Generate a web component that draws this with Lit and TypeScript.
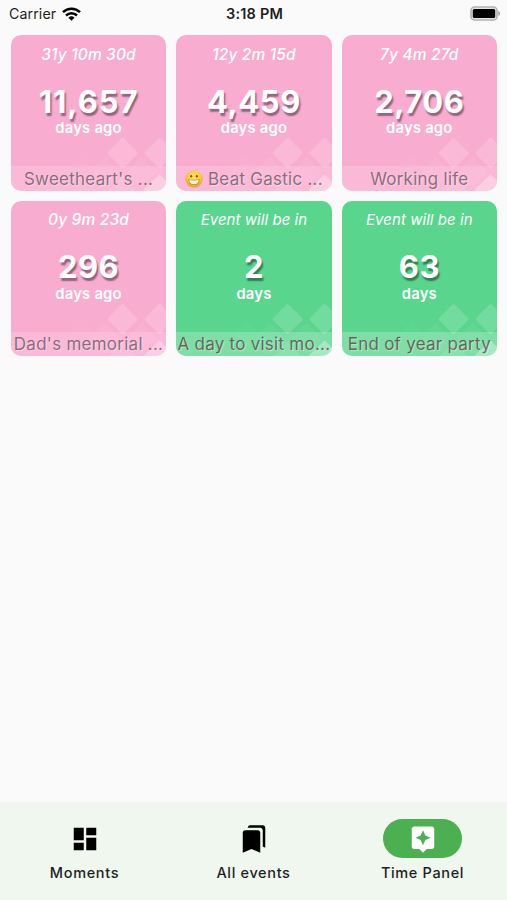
import { LitElement, html, css, svg } from "lit";
import { customElement, property } from "lit/decorators.js";
import { classMap } from "lit/directives/class-map.js";

interface Moment {
  span: string;
  count: string;
  unit: string;
  name: string;
  future?: boolean;
  emoji?: boolean;
}

const moments: Moment[] = [
  { span: "31y 10m 30d", count: "11,657", unit: "days ago", name: "Sweetheart's ..." },
  { span: "12y 2m 15d", count: "4,459", unit: "days ago", name: "Beat Gastic ...", emoji: true },
  { span: "7y 4m 27d", count: "2,706", unit: "days ago", name: "Working life" },
  { span: "0y 9m 23d", count: "296", unit: "days ago", name: "Dad's memorial ..." },
  { span: "Event will be in", count: "2", unit: "days", name: "A day to visit mo...", future: true },
  { span: "Event will be in", count: "63", unit: "days", name: "End of year party", future: true },
];

const tabs = [
  { label: "Moments", icon: "M3 13h8V3H3v10zm0 8h8v-6H3v6zm10 0h8V11h-8v10zm0-18v6h8V3h-8z" },
  {
    label: "All events",
    icon: "M19 18l2 1V3c0-1.1-.9-2-2-2H8.99C7.89 1 7 1.9 7 3h10c1.1 0 2 .9 2 2v13zM15 5H5c-1.1 0-2 .9-2 2v16l7-3 7 3V7c0-1.1-.9-2-2-2z",
  },
  {
    label: "Time Panel",
    active: true,
    icon: "M19 2H5c-1.1 0-2 .9-2 2v14c0 1.1.9 2 2 2h4l3 3 3-3h4c1.1 0 2-.9 2-2V4c0-1.1-.9-2-2-2zm-5.12 10.88L12 17l-1.88-4.12L6 11l4.12-1.88L12 5l1.88 4.12L18 11l-4.12 1.88z",
  },
];

const grin = html`<svg class="emoji" viewBox="0 0 18 18">
  <defs>
    <radialGradient id="face" cx=".5" cy=".4" r=".6">
      <stop offset="0" stop-color="#ffe65a" />
      <stop offset=".65" stop-color="#fbc93a" />
      <stop offset="1" stop-color="#e39a25" />
    </radialGradient>
  </defs>
  <circle cx="9" cy="9" r="8.6" fill="url(#face)" />
  <ellipse cx="6.2" cy="6.2" rx="1" ry="1.3" fill="#7b5520" />
  <ellipse cx="11.8" cy="6.2" rx="1" ry="1.3" fill="#7b5520" />
  <path d="M3.4 9.2q5.6 1 11.2 0c.3 3.600-2 5.900-5.600 5.900s-5.900-2.300-5.600-5.900z" fill="#b08a3c" />
  <path d="M4.200 10q4.800.8 9.600 0c0 2.700-1.900 4.300-4.800 4.300s-4.800-1.600-4.800-4.300z" fill="#f8f2d8" />
</svg>`;

@customElement("moment-card")
class MomentCard extends LitElement {
  @property({ attribute: false }) moment!: Moment;

  static styles = css`
    :host {
      display: block;
    }
    .card {
      position: relative;
      box-sizing: border-box;
      height: 155.5px;
      border-radius: 10px;
      overflow: hidden;
      background: #f8add0;
      color: #fff;
      text-align: center;
      display: flex;
      flex-direction: column;
      white-space: nowrap;
    }
    .future {
      background: #5ad58e;
    }
    .pattern {
      position: absolute;
      inset: 0;
      width: 100%;
      height: 100%;
    }
    .span {
      margin-top: 9.4px;
      height: 20px;
      line-height: 20px;
      font-size: 15.5px;
      font-style: italic;
      font-weight: 500;
      letter-spacing: 0.15px;
    }
    .future .span {
      font-size: 15px;
      font-weight: 400;
      letter-spacing: 0.05px;
    }
    .count {
      margin-top: 18.1px;
      height: 38px;
      line-height: 38px;
      font-size: 31px;
      font-weight: 700;
      letter-spacing: 0.5px;
      text-shadow: 1.5px 3px 1.5px rgba(0, 0, 0, 0.42);
    }
    .long {
      letter-spacing: 0.9px;
    }
    .unit {
      margin-top: -0.4px;
      height: 17px;
      line-height: 17px;
      font-size: 14.8px;
      font-weight: 600;
      letter-spacing: 0.2px;
    }
    .future .unit {
      margin-top: 0.2px;
    }
    .name {
      position: relative;
      margin-top: auto;
      height: 24.5px;
      display: flex;
      justify-content: center;
      align-items: center;
      gap: 5px;
      background: rgba(255, 255, 255, 0.15);
      color: rgba(65, 50, 55, 0.62);
      font-size: 17px;
      letter-spacing: 0.25px;
      text-shadow: 1px 1px 1px rgba(255, 255, 255, 0.4);
    }
    .future .name {
      background: rgba(255, 255, 255, 0.22);
      color: rgba(85, 50, 55, 0.72);
    }
    .emoji {
      width: 18px;
      height: 18px;
    }
  `;

  render() {
    const m = this.moment;
    return html`<div class=${classMap({ card: true, future: !!m.future })}>
      <svg class="pattern" viewBox="0 0 156 156" fill="#fff">
        <g stroke="#fff" stroke-width="3" stroke-linejoin="round" opacity=".15">
          <path d="M112 105l13.5 13.5-13.5 13.5-13.5-13.5z" />
          <path d="M149 105l13.5 13.5-13.5 13.5-13.5-13.5z" />
          <path d="M131 124l13 14-13 14-13-14z" opacity=".3" />
          <path d="M94 124l13 14-13 14-13-14z" opacity=".3" />
          <path d="M112 143l13 14-13 14-13-14z" opacity=".6" />
        </g>
        <path d="M149 140l16 15-16 15-16-15z" opacity=".32" />
        <path d="M70 119l13 14-13 14-13-14z" opacity=".025" />
      </svg>
      <div class="span">${m.span}</div>
      <div class=${classMap({ count: true, long: m.count.length > 5 })}>${m.count}</div>
      <div class="unit">${m.unit}</div>
      <div class="name">${m.emoji ? grin : ""}<span>${m.name}</span></div>
    </div>`;
  }
}

@customElement("app-root")
class AppRoot extends LitElement {
  static styles = css`
    :host {
      display: flex;
      flex-direction: column;
      height: 900px;
      background: #fafafa;
      font-family: Inter, "Liberation Sans", sans-serif;
      color: #1c1f1c;
      overflow: hidden;
    }
    .status {
      display: grid;
      grid-template-columns: 1fr auto 1fr;
      align-items: center;
      height: 27px;
      padding: 0 7px 0 9px;
      font-size: 14.2px;
    }
    .carrier {
      display: flex;
      align-items: center;
      gap: 6px;
      letter-spacing: 0.1px;
    }
    .wifi {
      width: 19px;
      height: 14px;
    }
    .clock {
      font-weight: 600;
      font-size: 14.5px;
      letter-spacing: 0.2px;
    }
    .battery {
      justify-self: end;
      width: 30px;
      height: 15px;
    }
    .grid {
      flex: 1;
      display: grid;
      grid-template-columns: repeat(3, 155.5px);
      align-content: start;
      gap: 9.9px;
      padding: 8.3px 10.8px;
    }
    .nav {
      display: grid;
      grid-template-columns: repeat(3, 1fr);
      box-sizing: border-box;
      height: 98.5px;
      padding-top: 17.5px;
      background: #eff7ef;
    }
    .tab {
      display: flex;
      flex-direction: column;
      align-items: center;
    }
    .pill {
      display: flex;
      align-items: center;
      justify-content: center;
      width: 79px;
      height: 39px;
      border-radius: 20px;
      color: #000;
    }
    .active {
      background: #4caf50;
      color: #fff;
    }
    .icon {
      width: 30px;
      height: 30px;
      fill: currentColor;
    }
    .label {
      margin-top: 5px;
      line-height: 20px;
      font-size: 14.5px;
      font-weight: 500;
      letter-spacing: 0.65px;
    }
  `;

  render() {
    return html`
      <div class="status">
        <div class="carrier">
          <span>Carrier</span>
          <svg class="wifi" viewBox="0 0 19 14">
            <g fill="none" stroke="#000" stroke-width="2.5">
              <path d="M1 5.2a12.2 12.2 0 0 1 17 0" />
              <path d="M4 8.5a7.9 7.9 0 0 1 11 0" />
            </g>
            <path d="M9.5 13.7L6.5 10.7a4.4 4.4 0 0 1 6 0z" />
          </svg>
        </div>
        <div class="clock">3:18 PM</div>
        <svg class="battery" viewBox="0 0 30 15">
          <rect x="1" y="1" width="26" height="13" rx="3.6" fill="#e4e4e4" stroke="#b2b2b2" stroke-width="1.6" />
          <rect x="2.8" y="3" width="22.4" height="9" rx="1.6" />
          <path d="M28.2 5a2.6 2.6 0 0 1 0 5z" fill="#aaa" />
        </svg>
      </div>
      <div class="grid">${moments.map((m) => html`<moment-card .moment=${m}></moment-card>`)}</div>
      <div class="nav">
        ${tabs.map(
          (t) => html`<div class="tab">
            <div class=${classMap({ pill: true, active: !!t.active })}>
              <svg class="icon" viewBox="0 0 24 24">${svg`<path d=${t.icon} />`}</svg>
            </div>
            <div class="label">${t.label}</div>
          </div>`
        )}
      </div>
    `;
  }
}
